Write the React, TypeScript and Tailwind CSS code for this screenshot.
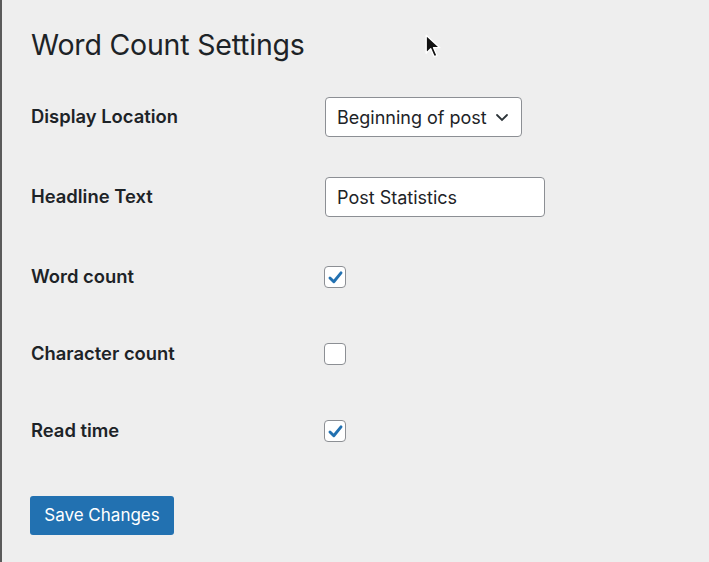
import React from 'react';

const Checkbox: React.FC<{ checked?: boolean }> = ({ checked }) => (
  <div className="w-[22px] h-[22px] rounded-[4px] border-[1.5px] border-[#8c8f94] bg-white flex items-center justify-center">
    {checked && (
      <svg width="17" height="17" viewBox="0 0 20 20">
        <path d="M3.5 10.5 L8 15 L16.5 4.5" fill="none" stroke="#2271b1" strokeWidth="3.4" strokeLinecap="round" strokeLinejoin="round" />
      </svg>
    )}
  </div>
);

const rows = [
  { label: 'Word count', checked: true },
  { label: 'Character count', checked: false },
  { label: 'Read time', checked: true },
];

const App: React.FC = () => {
  return (
    <div
      className="relative w-[709px] h-[562px] bg-[#eeeeee] border-l-2 border-[#5a5a5a] text-[#1d2327] overflow-hidden"
      style={{ fontFamily: 'Inter, "Open Sans", sans-serif' }}
    >
      <div className="pl-[29px] pt-[26px]">
        <h1 className="text-[28.5px] leading-[37px] font-normal tracking-[-0.2px]">Word Count Settings</h1>

        <div className="mt-[34px] flex items-center h-[40px]">
          <div className="w-[294px] text-[18.4px] font-semibold">Display Location</div>
          <div className="h-[40px] w-[197px] bg-white border border-[#8c8f94] rounded-[4px] flex items-center justify-between pl-[11px] pr-[12px] text-[18px]">
            <span>Beginning of post</span>
            <svg width="14" height="14" viewBox="0 0 14 14">
              <path d="M2 5 L7 10 L12 5" fill="none" stroke="#2c3338" strokeWidth="1.8" strokeLinecap="round" />
            </svg>
          </div>
        </div>

        <div className="mt-[40px] flex items-center h-[40px]">
          <div className="w-[294px] text-[18.4px] font-semibold">Headline Text</div>
          <div className="h-[40px] w-[220px] bg-white border border-[#8c8f94] rounded-[4px] flex items-center pl-[11px] text-[18px]">
            Post Statistics
          </div>
        </div>

        {rows.map((row, i) => (
          <div key={i} className={`flex items-center h-[40px] ${i === 0 ? 'mt-[40px]' : 'mt-[37px]'}`}>
            <div className="w-[293px] text-[18.4px] font-semibold">{row.label}</div>
            <Checkbox checked={row.checked} />
          </div>
        ))}

        <button className="mt-[45px] -ml-px h-[39px] w-[144px] bg-[#2271b1] text-white text-[17px] rounded-[3px]">
          Save Changes
        </button>
      </div>

      <svg className="absolute left-[423px] top-[34px]" width="16" height="25" viewBox="0 0 14 22">
        <path d="M1 1 L1 17 L5 13 L8 20 L10.5 19 L7.5 12 L13 12 Z" fill="#111" stroke="#fff" strokeWidth="1.2" strokeLinejoin="round" />
      </svg>
    </div>
  );
};

export default App;
